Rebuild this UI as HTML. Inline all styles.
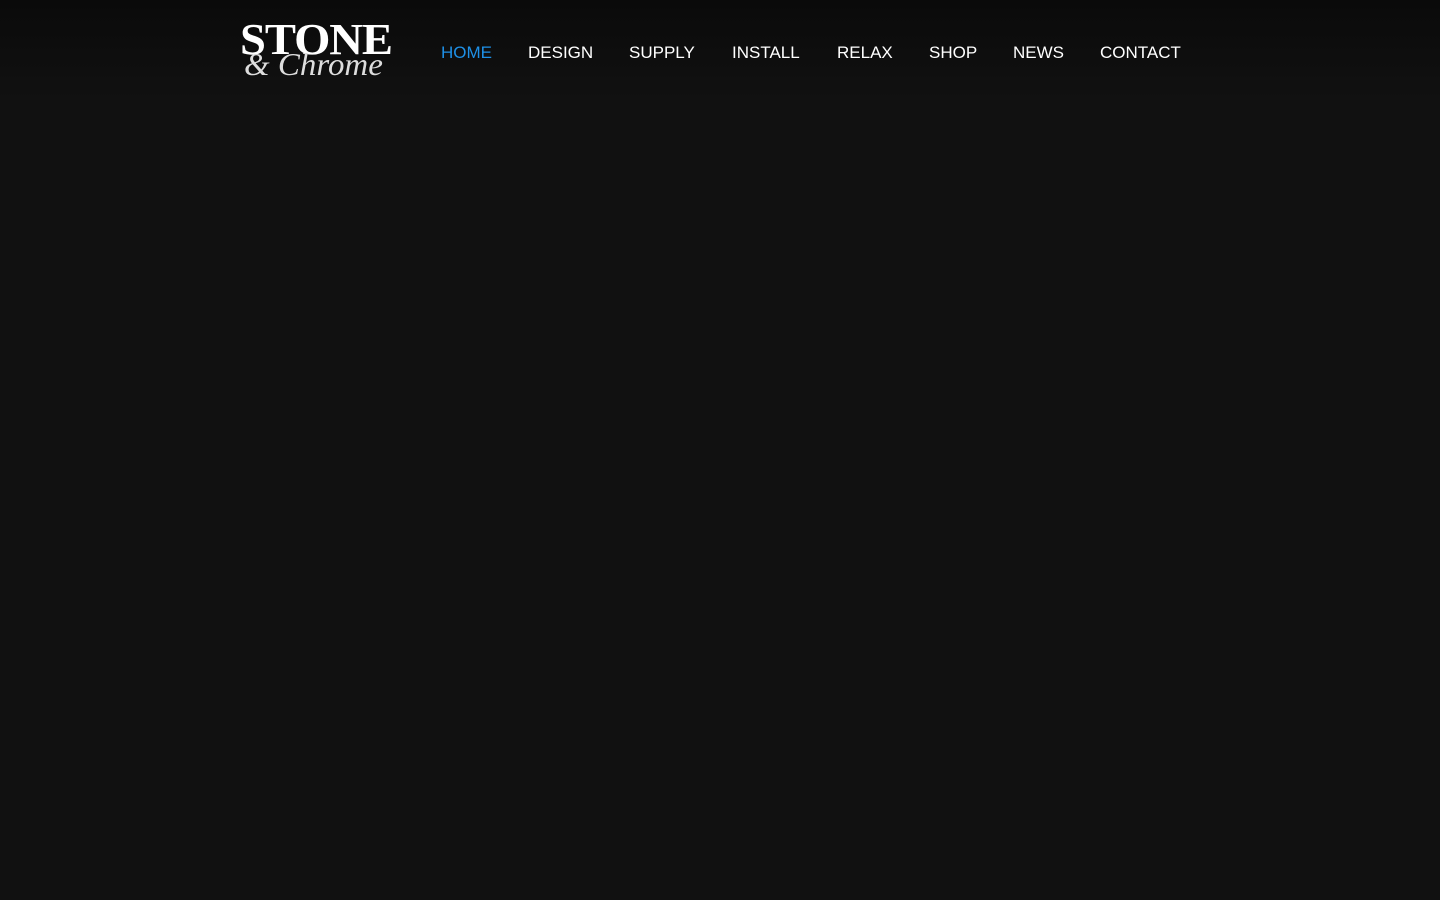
<!DOCTYPE html>
<html><head><style>
html,body{margin:0;background:#111111;width:1440px;height:900px;overflow:hidden}
.hdr{position:absolute;top:0;left:0;width:1440px;height:100px;background:linear-gradient(#0a0a0a,#111111)}
.logo1{position:absolute;left:240px;top:14px;font:bold 44px "Liberation Serif",serif;color:#fff;letter-spacing:-1px;transform:scaleX(1.06);transform-origin:left}
.logo2{position:absolute;left:244px;top:46px;font:italic 32px "Liberation Serif",serif;color:#ddd;transform:scaleX(1.03);transform-origin:left}
.nav{position:absolute;top:43px;font:17px "Liberation Sans",sans-serif;color:#fff}
</style></head><body>
<div class="hdr"></div>
<div class="logo1">STONE</div>
<div class="logo2">&amp; Chrome</div>
<div class="nav" style="left:441px;color:#1e90e6">HOME</div>
<div class="nav" style="left:528px">DESIGN</div>
<div class="nav" style="left:629px">SUPPLY</div>
<div class="nav" style="left:732px">INSTALL</div>
<div class="nav" style="left:837px">RELAX</div>
<div class="nav" style="left:929px">SHOP</div>
<div class="nav" style="left:1013px">NEWS</div>
<div class="nav" style="left:1100px">CONTACT</div>
</body></html>
